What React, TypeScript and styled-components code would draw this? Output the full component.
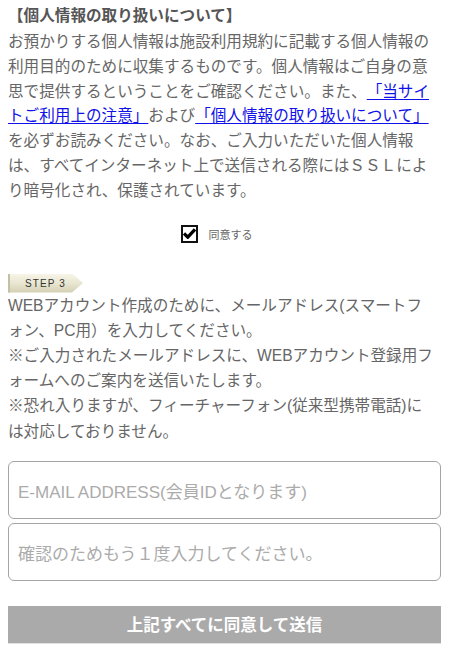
import React from "react";
import styled, { createGlobalStyle } from "styled-components";

const GlobalStyle = createGlobalStyle`
  html, body {
    margin: 0;
    padding: 0;
    background: #ffffff;
  }
  body {
    font-family: "Liberation Sans", "Noto Sans CJK JP", sans-serif;
    -webkit-font-smoothing: antialiased;
  }
  * { box-sizing: border-box; }
`;

const Page = styled.div`
  padding: 3px 8px 20px;
  line-break: normal;
  text-spacing-trim: space-all;
`;

const Title = styled.h2`
  margin: 0 0 2px;
  font-size: 15.6px;
  line-height: 25px;
  font-weight: bold;
  color: #555555;
`;

const Paragraph = styled.p<{ $lh: number }>`
  margin: 0;
  padding-right: 5px;
  font-size: 15.6px;
  line-height: ${(p) => p.$lh}px;
  color: #666666;
`;

const Link = styled.a`
  color: #1010e8;
  text-decoration: underline;
  text-underline-offset: 2px;
  cursor: pointer;
`;

const AgreeRow = styled.label`
  display: flex;
  align-items: center;
  justify-content: center;
  gap: 11px;
  height: 20px;
  margin-top: 20px;
  padding-right: 16px;
  cursor: pointer;
`;

const CheckBox = styled.span`
  display: inline-flex;
  align-items: center;
  justify-content: center;
  width: 17px;
  height: 18px;
  border: 2px solid #111111;
  background: #ffffff;
`;

const AgreeText = styled.span`
  font-size: 11px;
  color: #666666;
`;

const StepBadge = styled.div`
  display: flex;
  align-items: center;
  width: 75px;
  height: 19px;
  margin-top: 30px;
  padding-left: 17px;
  font-size: 10px;
  letter-spacing: 1.1px;
  color: #333333;
  background: linear-gradient(#f7f5e8 0%, #e8e5d0 50%, #d3cfb3 100%);
  box-shadow: inset 2px 0 0 #c4c0a3;
  clip-path: polygon(0 0, 64px 0, 75px 50%, 64px 100%, 0 100%);
`;

const Fields = styled.div`
  display: flex;
  flex-direction: column;
  gap: 4px;
  margin-top: 17px;
`;

const TextField = styled.input`
  width: 100%;
  height: 58px;
  padding: 6px 9px 0;
  border: 1px solid #a4a4a4;
  border-radius: 6px;
  background: #ffffff;
  font-family: "Liberation Sans", "Noto Sans CJK JP", sans-serif;
  font-size: 17px;
  color: #333333;
  outline: none;
  &::placeholder {
    color: #ababab;
  }
`;

const SubmitButton = styled.button`
  display: block;
  width: 100%;
  height: 38px;
  margin-top: 25px;
  border: none;
  border-bottom: 1px solid #e2e2e2;
  background: #aaaaaa;
  color: #ffffff;
  font-family: "Liberation Sans", "Noto Sans CJK JP", sans-serif;
  font-size: 16.5px;
  font-weight: bold;
  cursor: pointer;
`;

export default function App() {
  return (
    <>
      <GlobalStyle />
      <Page lang="ja">
        <Title>【個人情報の取り扱いについて】</Title>
        <Paragraph $lh={24.8}>
          お預かりする個人情報は施設利用規約に記載する個人情報の利用目的のために収集するものです。個人情報はご自身の意思で提供するということをご確認ください。また、
          <Link>「当サイトご利用上の注意」</Link>および
          <Link>「個人情報の取り扱いについて」</Link>
          を必ずお読みください。なお、ご入力いただいた個人情報は、すべてインターネット上で送信される際にはＳＳＬにより暗号化され、保護されています。
        </Paragraph>

        <AgreeRow>
          <CheckBox>
            <svg width="13" height="11" viewBox="0 0 13 11">
              <path
                d="M1 5.4 L4.8 9.2 L12 1.4"
                fill="none"
                stroke="#000"
                strokeWidth="3.2"
                strokeLinejoin="miter"
              />
            </svg>
          </CheckBox>
          <AgreeText>同意する</AgreeText>
        </AgreeRow>

        <StepBadge>STEP 3</StepBadge>
        <Paragraph $lh={25.2}>
          WEBアカウント作成のために、メールアドレス(スマートフォン、PC用）を入力してください。
          <br />
          ※ご入力されたメールアドレスに、WEBアカウント登録用フォームへのご案内を送信いたします。
          <br />
          ※恐れ入りますが、フィーチャーフォン(従来型携帯電話)には対応しておりません。
        </Paragraph>

        <Fields>
          <TextField type="email" placeholder="E-MAIL ADDRESS(会員IDとなります)" />
          <TextField type="email" placeholder="確認のためもう１度入力してください。" />
        </Fields>

        <SubmitButton type="button">上記すべてに同意して送信</SubmitButton>
      </Page>
    </>
  );
}
